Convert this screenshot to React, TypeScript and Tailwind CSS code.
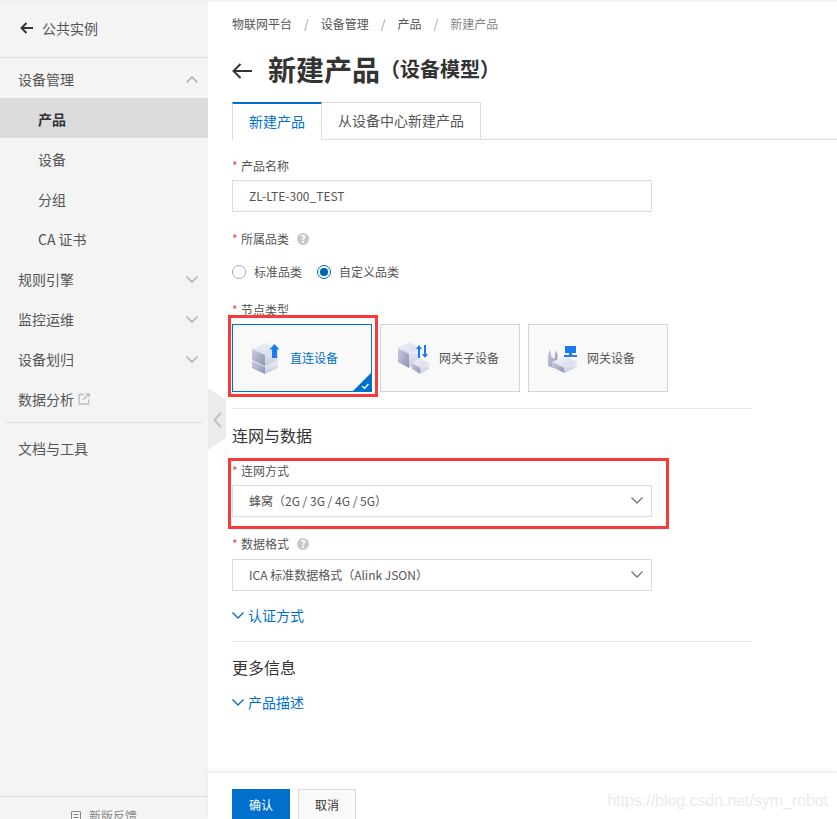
const font = { fontFamily: '"Noto Sans CJK SC", "Noto Sans", sans-serif' };

function Chevron({ up, className }: { up?: boolean; className?: string }) {
  return (
    <svg width="12" height="7" viewBox="0 0 12 7" fill="none" className={className}>
      <path
        d={up ? "M.5 6.500L6 1l5.500 5.500" : "M.5.5L6 6 11.500.5"}
        stroke="currentColor"
        strokeWidth="1.400"
      />
    </svg>
  );
}

function NavItem({ label, open }: { label: string; open?: boolean }) {
  return (
    <div className="flex h-10 items-center justify-between pl-[18px] pr-[10px] pt-[2px] text-sm text-[#555]">
      <span>{label}</span>
      <Chevron up={open} className="text-[#aaa]" />
    </div>
  );
}

function SubItem({ label, active }: { label: string; active?: boolean }) {
  return (
    <div
      className={`flex h-10 items-center pl-[38px] pt-[2px] text-sm ${
        active ? "bg-[#dcdcdc] font-bold text-[#333]" : "text-[#555]"
      }`}
    >
      {label}
    </div>
  );
}

function Help() {
  return (
    <span className="ml-2 flex h-3 w-3 items-center justify-center rounded-full bg-[#c8c8c8] text-[10px] font-bold leading-none text-white">
      ?
    </span>
  );
}

function Label({ text, help }: { text: string; help?: boolean }) {
  return (
    <div className="flex h-4 items-center text-xs text-[#555]">
      <span className="mr-[5px] w-[4px] text-[#e5484d]">*</span>
      <span>{text}</span>
      {help && <Help />}
    </div>
  );
}

function Select({ text }: { text: string }) {
  return (
    <div className="flex h-8 w-[420px] items-center justify-between border border-[#dcdcdc] pl-4 pr-[8px] text-xs text-[#555]">
      <span>{text}</span>
      <Chevron className="-mt-[2px] text-[#777]" />
    </div>
  );
}

function Disclosure({ label }: { label: string }) {
  return (
    <div className="flex h-5 items-center text-sm text-[#0070cc]">
      <Chevron className="mr-1" />
      {label}
    </div>
  );
}

function Gradients() {
  return (
    <svg width="0" height="0" className="absolute">
      <defs>
        <linearGradient id="top" x1="0" y1="0" x2="1" y2="1">
          <stop offset="0" stopColor="#f0f1f7" />
          <stop offset="1" stopColor="#d5d9ea" />
        </linearGradient>
        <linearGradient id="left" x1="0" y1="0" x2="1" y2="1">
          <stop offset="0" stopColor="#c9cde0" />
          <stop offset="1" stopColor="#8e94b0" />
        </linearGradient>
        <linearGradient id="right" x1="0" y1="0" x2="0" y2="1">
          <stop offset="0" stopColor="#eceef6" />
          <stop offset="1" stopColor="#c6cade" />
        </linearGradient>
      </defs>
    </svg>
  );
}

function Box({ x, y, w, h, d }: { x: number; y: number; w: number; h: number; d: number }) {
  // small isometric box: x,y is the left corner of the top face
  return (
    <g>
      <polygon points={`${x},${y} ${x + w},${y - d} ${x + 2 * w},${y} ${x + w},${y + d}`} fill="url(#top)" />
      <polygon points={`${x},${y} ${x + w},${y + d} ${x + w},${y + d + h} ${x},${y + h}`} fill="url(#left)" />
      <polygon points={`${x + w},${y + d} ${x + 2 * w},${y} ${x + 2 * w},${y + h} ${x + w},${y + d + h}`} fill="url(#right)" />
    </g>
  );
}

function DirectIcon() {
  return (
    <svg width="30" height="36" viewBox="0 0 30 36">
      <Box x={1} y={21} w={13} h={7} d={6} />
      <Box x={1} y={9} w={13} h={11} d={6} />
      <path d="M23.500 4l5 5.500H26V18h-5V9.500h-2.500z" fill="#1a7cf0" />
    </svg>
  );
}

function SubDeviceIcon() {
  return (
    <svg width="34" height="36" viewBox="0 0 34 36">
      <Box x={1} y={8} w={11} h={14} d={6} />
      <Box x={15} y={23} w={8.500} h={6} d={5} />
      <path d="M22 5l3 4h-2v9h-2V9h-2zM28 18l-3-4h2V5h2v9h2z" fill="#1a7cf0" />
    </svg>
  );
}

function GatewayIcon() {
  return (
    <svg width="32" height="36" viewBox="0 0 32 36">
      <path d="M2 15l2-6 1.500 8 3 2 1-9 2 4v15L2 26z" fill="url(#left)" />
      <Box x={6} y={22} w={12.500} h={5} d={6} />
      <path d="M19 6h11v7h-4v2h5v2H18v-2h5v-2h-4z" fill="#1a7cf0" />
    </svg>
  );
}

function NodeCard({
  label,
  selected,
  icon,
  gap,
}: {
  label: string;
  selected?: boolean;
  icon: React.ReactNode;
  gap: string;
}) {
  return (
    <div
      className={`relative flex h-[68px] w-[140px] items-center bg-[#f9f9f9] ${gap} ${
        selected ? "border border-[#0070cc] text-[#0070cc]" : "border border-[#d4d4d4] text-[#555]"
      } text-xs`}
    >
      {icon}
      <span>{label}</span>
      {selected && (
        <svg width="20" height="20" viewBox="0 0 20 20" className="absolute -bottom-px -right-px">
          <polygon points="20,0 20,20 0,20" fill="#0070cc" />
          <path d="M10 14l2.500 2.300L16.500 12" fill="none" stroke="#fff" strokeWidth="1.300" />
        </svg>
      )}
    </div>
  );
}

export default function App() {
  return (
    <div className="relative flex h-[819px] w-[837px] overflow-hidden bg-white" style={font}>
      <Gradients />

      {/* Sidebar */}
      <aside className="flex h-full w-[208px] shrink-0 flex-col bg-[#f4f4f4]">
        <div className="flex h-[58px] shrink-0 items-center border-b border-[#dcdcdc] pb-[2px] pl-[20px] text-sm text-[#555]">
          <svg width="13" height="12" viewBox="0 0 13 12" fill="none" className="mr-[9px] text-[#333]">
            <path d="M6.500 1L1.500 6l5 5M2 6h11" stroke="currentColor" strokeWidth="2" />
          </svg>
          公共实例
        </div>
        <NavItem label="设备管理" open />
        <SubItem label="产品" active />
        <SubItem label="设备" />
        <SubItem label="分组" />
        <SubItem label="CA 证书" />
        <NavItem label="规则引擎" />
        <NavItem label="监控运维" />
        <NavItem label="设备划归" />
        <div className="flex h-10 items-center pl-[18px] pt-[2px] text-sm text-[#555]">
          数据分析
          <svg width="12" height="12" viewBox="0 0 12 12" fill="none" className="ml-1 text-[#bbb]">
            <path d="M6 1.500H1V11h9.500V6.500M5 7l6-6M7.500 .8h3.700v3.700" stroke="currentColor" strokeWidth="1.300" />
          </svg>
        </div>
        <div className="mx-[6px] mt-[4px] border-t border-[#dcdcdc]" />
        <div className="flex h-[50px] items-center pl-[18px] text-sm text-[#555]">文档与工具</div>
        <div className="mt-auto flex h-[23px] items-start justify-center border-t border-[#dcdcdc] pt-[11px] text-xs text-[#888]">
          <span className="flex items-center leading-4">
            <svg width="10" height="10" viewBox="0 0 10 10" fill="none" className="mr-2">
              <path d="M.5.5h9v9h-9zM2.500 3.500h5M2.500 6.500h5" stroke="currentColor" />
            </svg>
            新版反馈
          </span>
        </div>
      </aside>

      {/* Main */}
      <main className="flex h-full min-w-0 flex-1 flex-col">
        <div className="flex-1 pl-6 pt-4">
          <div className="flex h-4 items-center text-xs text-[#555]">
            <span>物联网平台</span>
            <span className="mx-3 text-[#999]">/</span>
            <span>设备管理</span>
            <span className="mx-3 text-[#999]">/</span>
            <span>产品</span>
            <span className="mx-3 text-[#999]">/</span>
            <span className="text-[#888]">新建产品</span>
          </div>

          <div className="mt-[17px] flex h-10 items-center text-[#333]">
            <svg width="20" height="16" viewBox="0 0 20 16" fill="none" className="mr-4 mt-[3px]">
              <path d="M8.500 1L1.500 8l7 7M2 8h18" stroke="currentColor" strokeWidth="2" />
            </svg>
            <span className="text-[28px] font-bold">新建产品</span>
            <span className="text-xl font-bold">（设备模型）</span>
          </div>

          <div className="mt-[13px] flex h-[38px] border-b border-[#dcdcdc]">
            <div className="-mb-px flex w-[90px] items-center justify-center border-x border-t-2 border-x-[#dcdcdc] border-t-[#0070cc] bg-white pb-[2px] text-sm text-[#0070cc]">
              新建产品
            </div>
            <div className="flex w-[159px] items-center justify-center border-r border-t border-[#dcdcdc] pb-[2px] text-sm text-[#555]">
              从设备中心新建产品
            </div>
          </div>

          <div className="mt-[18px]">
            <Label text="产品名称" />
          </div>
          <div className="mt-[6px] flex h-8 w-[420px] items-center border border-[#dcdcdc] pl-4 text-xs text-[#555]">
            ZL-LTE-300_TEST
          </div>

          <div className="mt-[19px]">
            <Label text="所属品类" help />
          </div>
          <div className="mt-[17px] flex h-4 items-center text-xs text-[#555]">
            <span className="mr-2 h-[14px] w-[14px] rounded-full border border-[#aaa]" />
            <span>标准品类</span>
            <span className="ml-[15px] mr-2 flex h-[14px] w-[14px] items-center justify-center rounded-full border border-[#0064b4]">
              <span className="h-2 w-2 rounded-full bg-[#0064b4]" />
            </span>
            <span>自定义品类</span>
          </div>

          <div className="mt-[22px]">
            <Label text="节点类型" />
          </div>
          <div className="mt-[6px] flex gap-2">
            <NodeCard label="直连设备" selected icon={<DirectIcon />} gap="gap-[9px] pl-[18px]" />
            <NodeCard label="网关子设备" icon={<SubDeviceIcon />} gap="gap-2 pl-[16px]" />
            <NodeCard label="网关设备" icon={<GatewayIcon />} gap="gap-[9px] pl-[17px]" />
          </div>

          <div className="mt-4 w-[520px] border-t border-[#e8e8e8]" />

          <div className="mt-[14px] text-base leading-6 text-[#333]">连网与数据</div>
          <div className="mt-4">
            <Label text="连网方式" />
          </div>
          <div className="mt-[6px]">
            <Select text="蜂窝（2G / 3G / 4G / 5G）" />
          </div>

          <div className="mt-[19px]">
            <Label text="数据格式" help />
          </div>
          <div className="mt-[7px]">
            <Select text="ICA 标准数据格式（Alink JSON）" />
          </div>

          <div className="mt-[14px]">
            <Disclosure label="认证方式" />
          </div>

          <div className="mt-4 w-[520px] border-t border-[#e8e8e8]" />

          <div className="mt-[13px] text-base leading-6 text-[#333]">更多信息</div>
          <div className="mt-[13px]">
            <Disclosure label="产品描述" />
          </div>
        </div>

        <div className="flex h-[47px] shrink-0 gap-2 border-t border-[#eee] pl-6 pt-4 shadow-[0_-2px_4px_rgba(0,0,0,0.04)]">
          <div className="flex h-8 w-[58px] items-center justify-center bg-[#0070cc] text-xs text-white">确认</div>
          <div className="flex h-8 w-[58px] items-center justify-center border border-[#dcdcdc] bg-[#f9f9f9] text-xs text-[#333]">
            取消
          </div>
        </div>
      </main>

      {/* Collapse handle */}
      <div className="absolute left-[208px] top-[388px] h-[62px] w-[18px]">
        <svg width="18" height="62" viewBox="0 0 18 62" className="absolute inset-0">
          <polygon points="0,0 18,12 18,50 0,62" fill="#ebebeb" />
          <path d="M13 25l-6.500 7 6.500 7" fill="none" stroke="#c4c4c4" strokeWidth="2" />
        </svg>
      </div>

      {/* Red annotations */}
      <div className="pointer-events-none absolute left-[228px] top-[315px] h-[82px] w-[150px] border-[3px] border-[#f93a3a]" />
      <div className="pointer-events-none absolute left-[228px] top-[458px] h-[71px] w-[441px] border-[3px] border-[#f93a3a]" />

      {/* Top shade */}
      <div className="pointer-events-none absolute inset-x-0 top-0 h-[3px] bg-gradient-to-b from-[#eeeeee] to-transparent" />

      {/* Watermark */}
      <div
        className="pointer-events-none absolute right-[9px] top-[792px] text-base leading-[18px] tracking-[-0.06px] text-[#ebebeb]"
        style={{ fontFamily: '"Liberation Sans", sans-serif' }}
      >
        https://blog.csdn.net/sym_robot
      </div>
    </div>
  );
}
